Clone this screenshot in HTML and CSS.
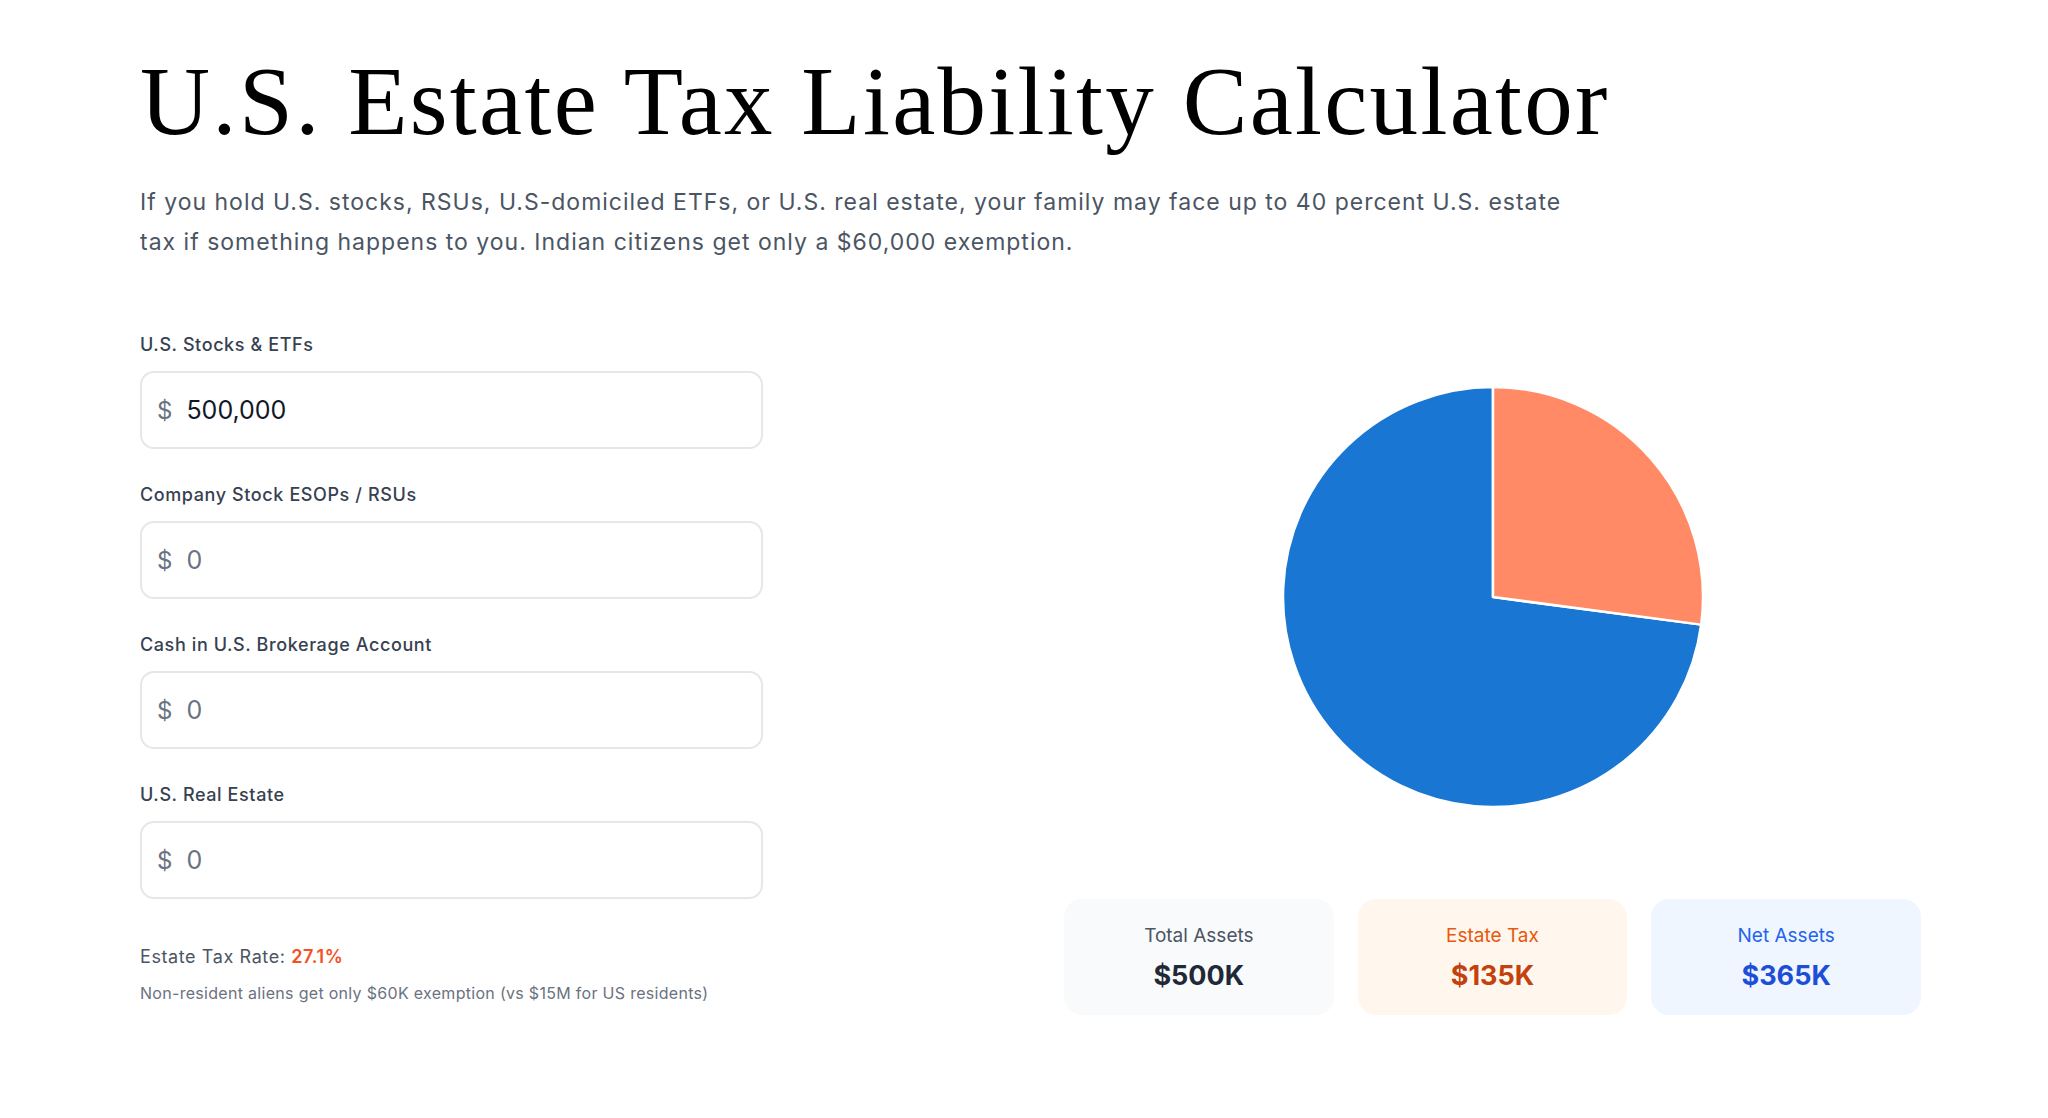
FILE: index.html
```html
<!DOCTYPE html>
<html lang="en">

<head>
    <meta charset="UTF-8">
    <meta name="viewport" content="width=device-width, initial-scale=1.0">
    <title>U.S. Estate Tax Liability Calculator</title>
    <link rel="stylesheet" href="styles.css">
</head>

<body>
    <div class="page">
        <h1 class="title">U.S. Estate Tax Liability Calculator</h1>
        <p class="intro">If you hold U.S. stocks, RSUs, U.S-domiciled ETFs, or U.S. real estate, your family may face up to 40 percent U.S. estate tax if something happens to you. Indian citizens get only a $60,000 exemption.</p>

        <div class="calc">
            <div class="inputs">
                <div class="field">
                    <label class="field-label" for="stocks">U.S. Stocks &amp; ETFs</label>
                    <div class="field-box">
                        <span class="field-prefix">$</span>
                        <input class="field-input" id="stocks" type="text" value="500,000" placeholder="0">
                    </div>
                </div>
                <div class="field">
                    <label class="field-label" for="esop">Company Stock ESOPs / RSUs</label>
                    <div class="field-box">
                        <span class="field-prefix">$</span>
                        <input class="field-input" id="esop" type="text" placeholder="0">
                    </div>
                </div>
                <div class="field">
                    <label class="field-label" for="cash">Cash in U.S. Brokerage Account</label>
                    <div class="field-box">
                        <span class="field-prefix">$</span>
                        <input class="field-input" id="cash" type="text" placeholder="0">
                    </div>
                </div>
                <div class="field">
                    <label class="field-label" for="realty">U.S. Real Estate</label>
                    <div class="field-box">
                        <span class="field-prefix">$</span>
                        <input class="field-input" id="realty" type="text" placeholder="0">
                    </div>
                </div>

                <p class="rate">Estate Tax Rate: <span class="rate-value">27.1%</span></p>
                <p class="note">Non-resident aliens get only $60K exemption (vs $15M for US residents)</p>
            </div>

            <div class="results">
                <!-- 27.1% 的税，从 12 点方向顺时针画 -->
                <svg class="pie" width="424" height="424" viewBox="0 0 424 424">
                    <path d="M212 212 L420.18 239.63 A210 210 0 1 1 212 2 Z" fill="#1976d2" stroke="#fff" stroke-width="2.5" stroke-linejoin="round" />
                    <path d="M212 212 L212 2 A210 210 0 0 1 420.18 239.63 Z" fill="#ff8a65" stroke="#fff" stroke-width="2.5" stroke-linejoin="round" />
                </svg>

                <div class="cards">
                    <div class="card card-total">
                        <div class="card-label">Total Assets</div>
                        <div class="card-value">$500K</div>
                    </div>
                    <div class="card card-tax">
                        <div class="card-label">Estate Tax</div>
                        <div class="card-value">$135K</div>
                    </div>
                    <div class="card card-net">
                        <div class="card-label">Net Assets</div>
                        <div class="card-value">$365K</div>
                    </div>
                </div>
            </div>
        </div>
    </div>
</body>

</html>
```

FILE: styles.css
```css
* {
    margin: 0;
    padding: 0;
    box-sizing: border-box;
}

body {
    background-color: #fff;
    font-family: Inter, "Noto Sans", sans-serif;
    color: #111827;
}

.page {
    padding: 44px 127px 60px 140px;
}

.title {
    font-family: "Liberation Serif", "Times New Roman", serif;
    font-size: 97px;
    font-weight: 400;
    line-height: 1.2;
    letter-spacing: 2.3px;
    color: #000;
}

.intro {
    max-width: 1440px;
    margin-top: 22px;
    font-size: 23px;
    line-height: 40px;
    letter-spacing: 1px;
    color: #4b5563;
}

/* 左右两栏 */
.calc {
    display: grid;
    grid-template-columns: 857px 857px;
    column-gap: 67px;
    margin-top: 71px;
}

.field {
    margin-bottom: 34px;
}

.field-label {
    display: block;
    font-size: 18px;
    font-weight: 500;
    line-height: 24px;
    letter-spacing: 0.6px;
    color: #374151;
    margin-bottom: 14px;
}

.field-box {
    display: flex;
    align-items: center;
    width: 623px;
    height: 78px;
    padding: 0 15px;
    gap: 14px;
    border: 2px solid #e5e7eb;
    border-radius: 14px;
    background-color: #fff;
}

.field-prefix {
    font-size: 24px;
    color: #6b7280;
}

.field-input {
    flex: 1;
    border: none;
    outline: none;
    background: transparent;
    font-family: inherit;
    font-size: 25px;
    color: #111827;
}

.field-input::placeholder {
    color: #6b7280;
}

/* 和上面 field 的 margin 会合并，所以这里要大一些 */
.rate {
    margin-top: 44px;
    font-size: 18px;
    line-height: 28px;
    letter-spacing: 0.6px;
    color: #4b5563;
}

.rate-value {
    font-weight: 600;
    color: #f4511e;
}

.note {
    margin-top: 11px;
    font-size: 16px;
    line-height: 22px;
    letter-spacing: 0.3px;
    color: #6b7280;
}

/* 右侧：饼图 + 三张卡片 */
.results {
    display: flex;
    flex-direction: column;
    align-items: center;
    padding-top: 52px;
}

.pie {
    display: block;
}

.cards {
    display: grid;
    grid-template-columns: repeat(3, 1fr);
    gap: 24px;
    width: 100%;
    margin-top: 90px;
}

.card {
    height: 116px;
    border-radius: 18px;
    display: flex;
    flex-direction: column;
    align-items: center;
    justify-content: center;
    gap: 9px;
}

.card-label {
    font-size: 19px;
    line-height: 28px;
}

.card-value {
    font-size: 27px;
    font-weight: 700;
    line-height: 34px;
}

.card-total {
    background-color: #f9fafb;
}

.card-total .card-label {
    color: #4b5563;
}

.card-total .card-value {
    color: #1f2937;
}

.card-tax {
    background-color: #fff7ed;
}

.card-tax .card-label {
    color: #ea580c;
}

.card-tax .card-value {
    color: #c2410c;
}

.card-net {
    background-color: #eff6ff;
}

.card-net .card-label {
    color: #2563eb;
}

.card-net .card-value {
    color: #1d4ed8;
}
```
